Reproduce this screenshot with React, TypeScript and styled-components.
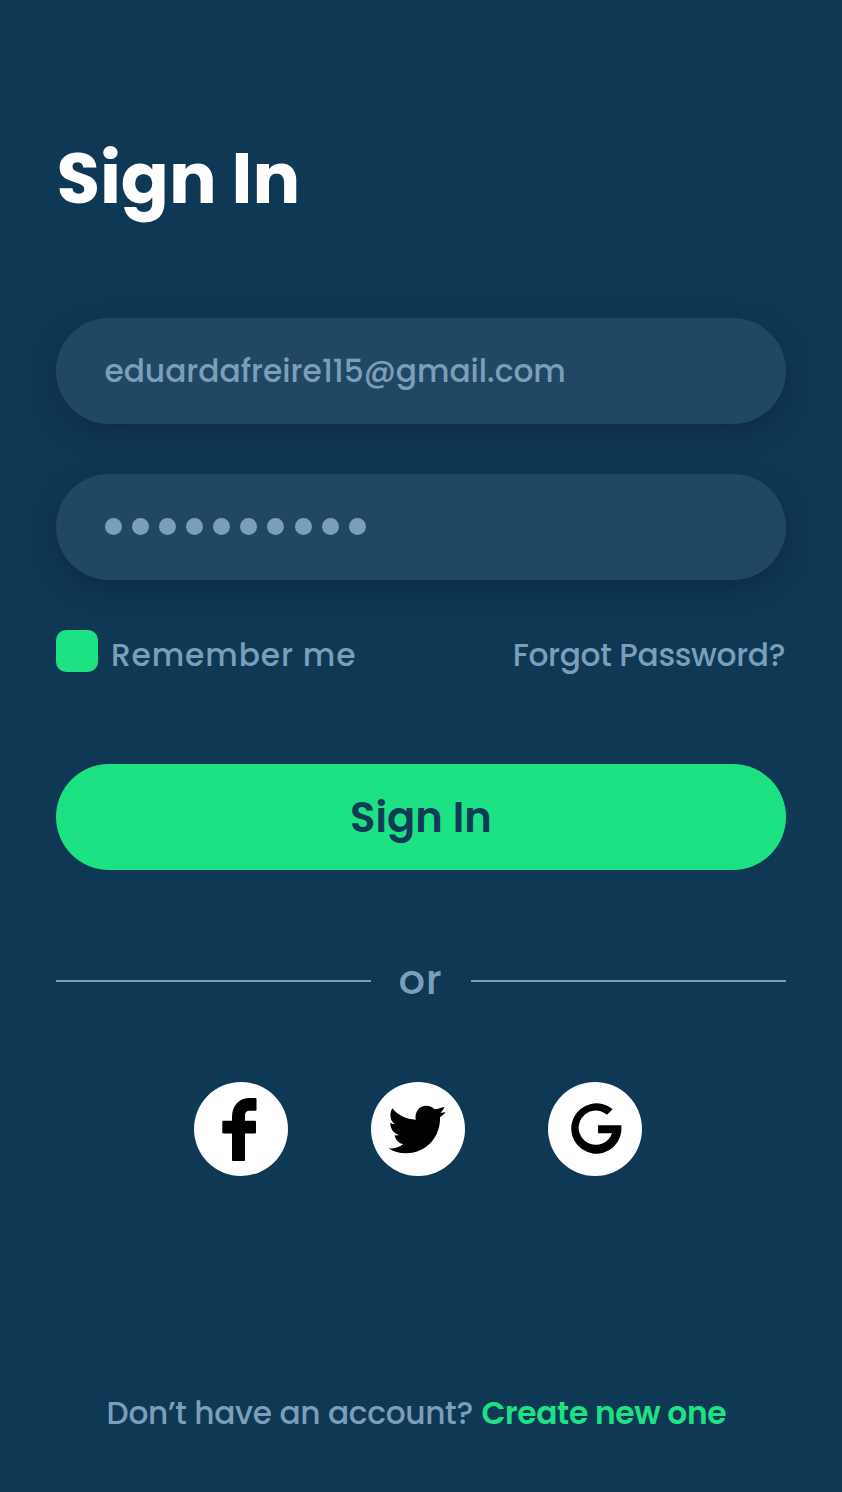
import React from "react";
import styled, { createGlobalStyle } from "styled-components";

const color = {
  page: "#0f3854",
  field: "#204864",
  muted: "#7b9fbb",
  accent: "#1de283",
  ink: "#103b56",
};

const GlobalStyle = createGlobalStyle`
  * { box-sizing: border-box; }
  body {
    margin: 0;
    background: ${color.page};
    font-family: Poppins, Inter, sans-serif;
    font-weight: 500;
    color: ${color.muted};
  }
  h1, p { margin: 0; }
`;

const Screen = styled.main`
  display: flex;
  flex-direction: column;
  width: 842px;
  height: 1492px;
  padding: 139px 56.4px 0;
  overflow: hidden;
`;

const Title = styled.h1`
  height: 80px;
  line-height: 80px;
  font-size: 70.8px;
  font-weight: 700;
  color: #fff;
  white-space: nowrap;
`;

const Form = styled.form`
  display: flex;
  flex-direction: column;
  margin-top: 98.6px;
`;

const Field = styled.div`
  display: flex;
  align-items: center;
  height: 106px;
  padding: 0 48px;
  border-radius: 53px;
  background: ${color.field};
  box-shadow: 0 8px 25px rgba(17, 35, 66, 0.65);

  & + & { margin-top: 50px; }
`;

const Label = styled.span<{ $size?: number; $spacing?: number }>`
  font-size: ${(p) => p.$size ?? 31.25}px;
  line-height: 40px;
  letter-spacing: ${(p) => p.$spacing ?? -0.34}px;
  white-space: nowrap;
`;

const Dots = styled.div`
  display: flex;
  gap: 10.1px;
  padding-left: 0.5px;
`;

const Dot = styled.i`
  width: 17px;
  height: 17px;
  border-radius: 50%;
  background: ${color.muted};
`;

const Options = styled.div`
  display: flex;
  align-items: flex-start;
  justify-content: space-between;
  height: 42px;
  margin-top: 50px;
  padding-right: 0.5px;
`;

const Remember = styled.label`
  display: flex;
  gap: 12.5px;
`;

const Checkbox = styled.span`
  width: 42px;
  height: 42px;
  border-radius: 10px;
  background: ${color.accent};
`;

const OptionText = styled(Label)`
  margin-top: 5px;
`;

const Submit = styled.button`
  height: 106px;
  margin-top: 92px;
  padding: 2px 0 0;
  border: 0;
  border-radius: 53px;
  background: ${color.accent};
  color: ${color.ink};
  font: 600 41.67px/50px Poppins, Inter, sans-serif;
`;

const Divider = styled.div`
  display: flex;
  align-items: center;
  height: 50px;
  margin-top: 86.3px;
`;

const Rule = styled.span`
  flex: 1;
  height: 2px;
  background: ${color.muted};
`;

const Or = styled(Label)`
  width: 100px;
  padding-right: 1px;
  margin-bottom: 2px;
  text-align: center;
`;

const Socials = styled.div`
  display: flex;
  gap: 83px;
  margin: 76px 0 0 137.5px;
`;

const Social = styled.a`
  width: 94px;
  height: 94px;
  border-radius: 50%;
  background: #fff;

  svg { display: block; }
`;

const Footer = styled.p`
  display: flex;
  gap: 8.5px;
  margin: 217px 0 0 50.2px;
`;

const CreateLink = styled(Label)`
  font-weight: 600;
  color: ${color.accent};
`;

const Icon = ({ d, viewBox }: { d: string; viewBox: string }) => (
  <svg width="94" height="94" viewBox={viewBox}>
    <path d={d} fill="#000" />
  </svg>
);

const facebook =
  "M61.8 16H56C45 16 38 23.5 38 35V38.7H29.300q-1 0-1 1V50.5q0 1 1 1H38V78q0 1 1 1H50q1 0 1-1V51.5H61q1 0 1-1V39.7q0-1-1-1H51V33.5C51 30.3 52.5 28.8 55.5 28.8H61.5q1 0 1-1V17q0-1-1-1z";
const twitter =
  "M82 100C98 121 125 133 152 134C149 110 163 92.500 184 92.500C194 92.500 203 97 208 103C219 102 229 98 238 96C236 103 232 108 226 113C232 113 237 112 242 112C237 118 231 123 225 127C227 180 189 235 122 235C103 235 85 230 71 220C87 222 102 217 115 207C102 206 92 196 89 181C94 182 98 181 102 180C86 175 76 162 76 143C80 145 84 147 89 147C74 136 73 115 82 100Z";
const google =
  "M209 103L192 119A51.500 51.500 0 1 0 207 175H165V151H235A75.500 75.500 0 1 1 209 103Z";

export default function App() {
  return (
    <>
      <GlobalStyle />
      <Screen>
        <Title>Sign In</Title>
        <Form>
          <Field>
            <Label $spacing={0}>eduardafreire115@gmail.com</Label>
          </Field>
          <Field>
            <Dots>
              {Array.from({ length: 10 }, (_, i) => (
                <Dot key={i} />
              ))}
            </Dots>
          </Field>
          <Options>
            <Remember>
              <Checkbox />
              <OptionText $spacing={0.9}>Remember me</OptionText>
            </Remember>
            <OptionText>Forgot Password?</OptionText>
          </Options>
          <Submit type="button">Sign In</Submit>
        </Form>
        <Divider>
          <Rule />
          <Or $size={41.67} $spacing={0.8}>or</Or>
          <Rule />
        </Divider>
        <Socials>
          <Social aria-label="Facebook">
            <Icon d={facebook} viewBox="0 0 94 94" />
          </Social>
          <Social aria-label="Twitter">
            <Icon d={twitter} viewBox="18 21 282 282" />
          </Social>
          <Social aria-label="Google">
            <Icon d={google} viewBox="15 21 282 282" />
          </Social>
        </Socials>
        <Footer>
          <Label>Don’t have an account?</Label>
          <CreateLink>Create new one</CreateLink>
        </Footer>
      </Screen>
    </>
  );
}
